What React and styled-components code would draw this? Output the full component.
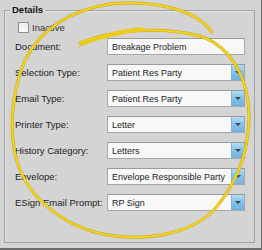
import React from "react";
import styled, { createGlobalStyle } from "styled-components";

const Global = createGlobalStyle`
  html, body { margin: 0; padding: 0; background: #d4d4d4; }
  * { box-sizing: border-box; }
`;

const Frame = styled.div`
  position: relative;
  width: 262px;
  height: 250px;
  background: #d4d4d4;
  border-right: 1px solid #6e6e6e;
  border-bottom: 2px solid #6e6e6e;
  padding: 4px 6px 0 4px;
  font-family: "Liberation Sans", Arial, sans-serif;
  font-size: 9.5px;
  color: #1c1c1c;
`;

const Group = styled.fieldset`
  margin: 0;
  padding: 0;
  height: 239px;
  border: 1px solid #a2a2a2;
  box-shadow: inset 1px 1px 0 #e4e4e4;
  min-width: 0;
`;

const Legend = styled.legend`
  margin-left: 5px;
  padding: 0 2px;
  font-weight: bold;
  font-size: 9.5px;
  line-height: 12px;
  color: #111;
`;

const Body = styled.div`
  padding: 5px 9px 0 10px;
  display: flex;
  flex-direction: column;
  gap: 4px;
`;

const CheckRow = styled.label`
  display: flex;
  align-items: center;
  gap: 3px;
  margin-left: 3px;
  height: 13px;
  color: #333;
`;

const Box = styled.span`
  width: 11px;
  height: 11px;
  border: 1px solid #8c8c8c;
  background: linear-gradient(#ececec, #fafafa);
`;

const Form = styled.div`
  display: grid;
  grid-template-columns: 92px 138px;
  grid-auto-rows: 17px;
  row-gap: 9px;
  align-items: center;
`;

const Label = styled.span`
  white-space: nowrap;
`;

const Field = styled.div`
  height: 17px;
  display: flex;
  align-items: stretch;
  border: 1px solid #a6a6a6;
  border-top-color: #9a9a9a;
  background: #f8f8f8;
`;

const Value = styled.span`
  flex: 1;
  padding-left: 4px;
  display: flex;
  align-items: center;
  white-space: nowrap;
  overflow: hidden;
  font-size: 9px;
`;

const Arrow = styled.span`
  width: 13px;
  display: flex;
  align-items: center;
  justify-content: center;
  border-left: 1px solid #7fb4da;
  background: linear-gradient(#b4daf3, #86c1e8 50%, #6fb2e0);
  &::after {
    content: "";
    border-left: 3px solid transparent;
    border-right: 3px solid transparent;
    border-top: 3px solid #3c4650;
  }
`;

const Overlay = styled.svg`
  position: absolute;
  left: 0;
  top: 0;
  pointer-events: none;
`;

const rows = [
  ["Document:", "Breakage Problem", false],
  ["Selection Type:", "Patient Res Party", true],
  ["Email Type:", "Patient Res Party", true],
  ["Printer Type:", "Letter", true],
  ["History Category:", "Letters", true],
  ["Envelope:", "Envelope Responsible Party", true],
  ["ESign Email Prompt:", "RP Sign", true],
];

const swirl =
  "M80,43 C110,30 160,26 200,36 C235,48 250,85 249,120 C248,148 240,180 214,210 C190,234 150,240 115,236 C72,231 35,205 20,170 C8,140 10,95 25,60 C40,30 70,10 110,4 C150,0 195,8 212,32";

export default function App() {
  return (
    <>
      <Global />
      <Frame>
        <Group>
          <Legend>Details</Legend>
          <Body>
            <CheckRow>
              <Box />
              Inactive
            </CheckRow>
            <Form>
              {rows.map(([l, v, combo]) => (
                <React.Fragment key={l}>
                  <Label>{l}</Label>
                  <Field>
                    <Value>{v}</Value>
                    {combo && <Arrow />}
                  </Field>
                </React.Fragment>
              ))}
            </Form>
          </Body>
        </Group>
        <Overlay width="262" height="250" viewBox="0 0 262 250">
          <path d={swirl} fill="none" stroke="#c9a70e" strokeWidth="3" strokeLinecap="round" />
          <path d={swirl} fill="none" stroke="#f2d422" strokeWidth="2" strokeLinecap="round" />
          <path d="M76,48 Q98,32 140,27 L150,30 Q108,35 76,48 Z" fill="#eccb1c" />
        </Overlay>
      </Frame>
    </>
  );
}
